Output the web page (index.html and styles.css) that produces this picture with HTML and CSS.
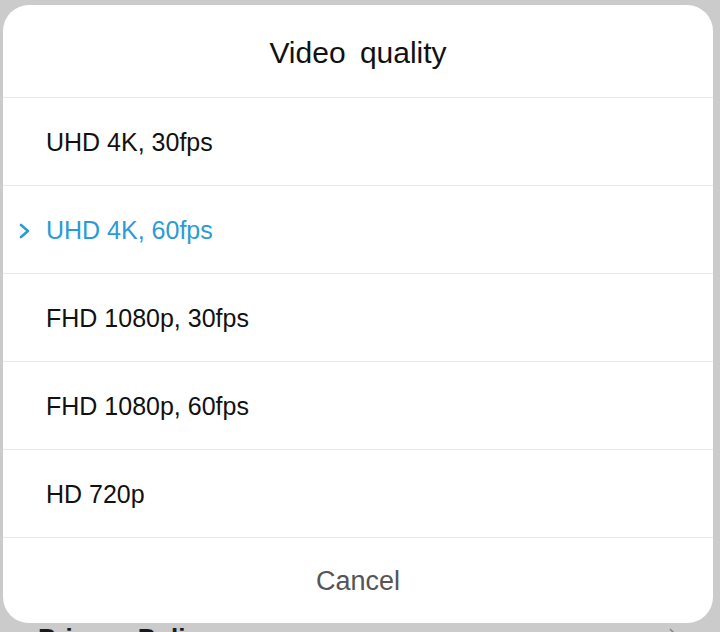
FILE: index.html
```html
<!DOCTYPE html>
<html>
<head>
<meta charset="utf-8">
<link rel="stylesheet" href="styles.css">
</head>
<body>
<div class="screen">
  <div class="dialog">
    <div class="dialog-title">Video quality</div>
    <ul class="options">
      <li class="option"><span class="marker"></span><span class="label">UHD 4K, 30fps</span></li>
      <li class="option selected"><span class="marker"><svg width="12" height="16" viewBox="0 0 12 16"><polyline points="2,2 9,8 2,14" fill="none" stroke="#2b9bd8" stroke-width="2.6" stroke-linecap="round" stroke-linejoin="round"/></svg></span><span class="label">UHD 4K, 60fps</span></li>
      <li class="option"><span class="marker"></span><span class="label">FHD 1080p, 30fps</span></li>
      <li class="option"><span class="marker"></span><span class="label">FHD 1080p, 60fps</span></li>
      <li class="option"><span class="marker"></span><span class="label">HD 720p</span></li>
    </ul>
    <div class="cancel">Cancel</div>
  </div>
  <div class="behind-row">
    <span class="behind-label">Privacy Policy</span>
    <svg class="behind-chevron" width="12" height="18" viewBox="0 0 12 18"><polyline points="2,2 9,9 2,16" fill="none" stroke="#888" stroke-width="1.6"/></svg>
  </div>
</div>
</body>
</html>
```
FILE: styles.css
```css
html, body {
  margin: 0;
  padding: 0;
}
body {
  background: #cbcbcb;
  font-family: "Liberation Sans", Arial, sans-serif;
  width: 720px;
  height: 632px;
  overflow: hidden;
}
.screen {
  padding-top: 5px;
}
.dialog {
  margin-left: 3px;
  width: 710px;
  height: 618px;
  background: #ffffff;
  border-radius: 26px;
  display: flex;
  flex-direction: column;
  overflow: hidden;
}
.dialog-title {
  height: 92px;
  box-sizing: border-box;
  padding-top: 4px;
  display: flex;
  align-items: center;
  justify-content: center;
  font-size: 30px;
  word-spacing: 6px;
  color: #111111;
}
.options {
  list-style: none;
  margin: 0;
  padding: 0;
}
.option {
  height: 88px;
  box-sizing: border-box;
  border-top: 1px solid #e9e9e9;
  display: flex;
  align-items: center;
  padding-left: 16px;
  padding-top: 2px;
  font-size: 25px;
  color: #111111;
}
.marker {
  width: 27px;
  display: flex;
  align-items: center;
}
.option.selected {
  color: #2b9bd8;
}
.cancel {
  flex: 1;
  border-top: 1px solid #e9e9e9;
  display: flex;
  align-items: center;
  justify-content: center;
  font-size: 27px;
  color: #555555;
  padding-top: 2px;
}
.behind-row {
  display: flex;
  align-items: flex-start;
  justify-content: space-between;
  padding: 0 40px 0 38px;
  height: 30px;
}
.behind-label {
  font-size: 26px;
  font-weight: bold;
  color: #1a1a1a;
  line-height: 30px;
}
.behind-chevron {
  margin-top: 4px;
}
```
